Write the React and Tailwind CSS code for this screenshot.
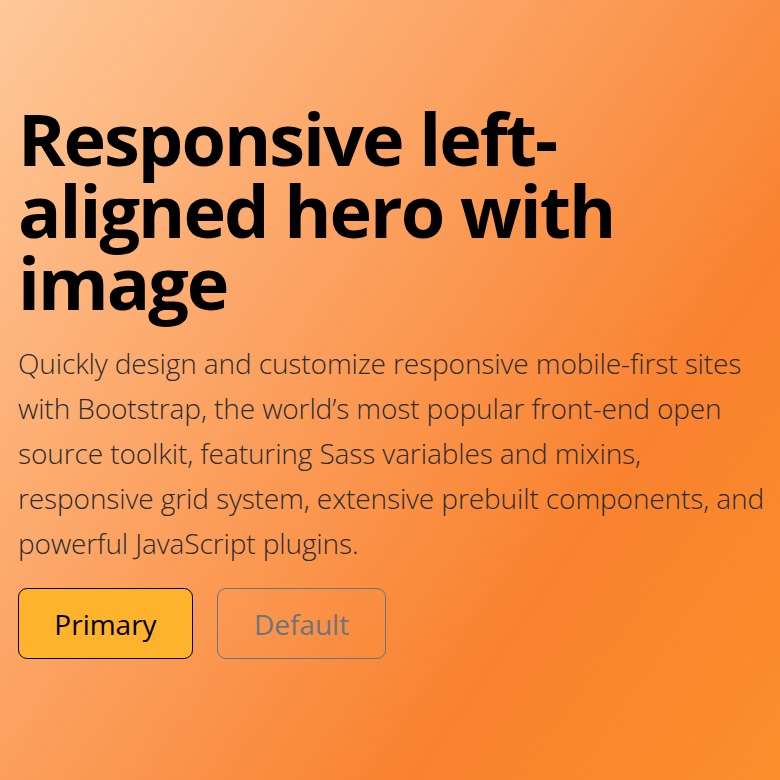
const App = () => {
  return (
    <div className="min-h-[780px] w-full bg-[linear-gradient(125deg,#fec899_0%,#fca566_35%,#f9822f_72%,#fb8e2b_100%)] font-['Open_Sans','Noto_Sans',sans-serif] text-[#212529]">
      <div className="pl-[18px] pr-[14px] pt-[102px]">
        <h1 className="text-[72px] font-bold leading-[72px] tracking-[-2px] text-black">
          Responsive left-aligned hero with image
        </h1>
        <p className="mt-[23px] text-[28px] font-light leading-[45px] tracking-[-0.1px] text-[#2a2c30]">
          Quickly design and customize responsive mobile-first sites with
          Bootstrap, the world’s most popular front-end open source toolkit,
          featuring Sass variables and mixins, responsive grid system,
          extensive prebuilt components, and powerful JavaScript plugins.
        </p>
        <div className="mt-[22px] flex gap-6">
          <button className="h-[71px] w-[175px] rounded-[9px] border border-black bg-[#ffb22c] text-[28px] text-black">
            Primary
          </button>
          <button className="h-[71px] w-[169px] rounded-[9px] border border-[#6c757d] text-[28px] text-[#6c757d]">
            Default
          </button>
        </div>
      </div>
    </div>
  )
}

export default App
